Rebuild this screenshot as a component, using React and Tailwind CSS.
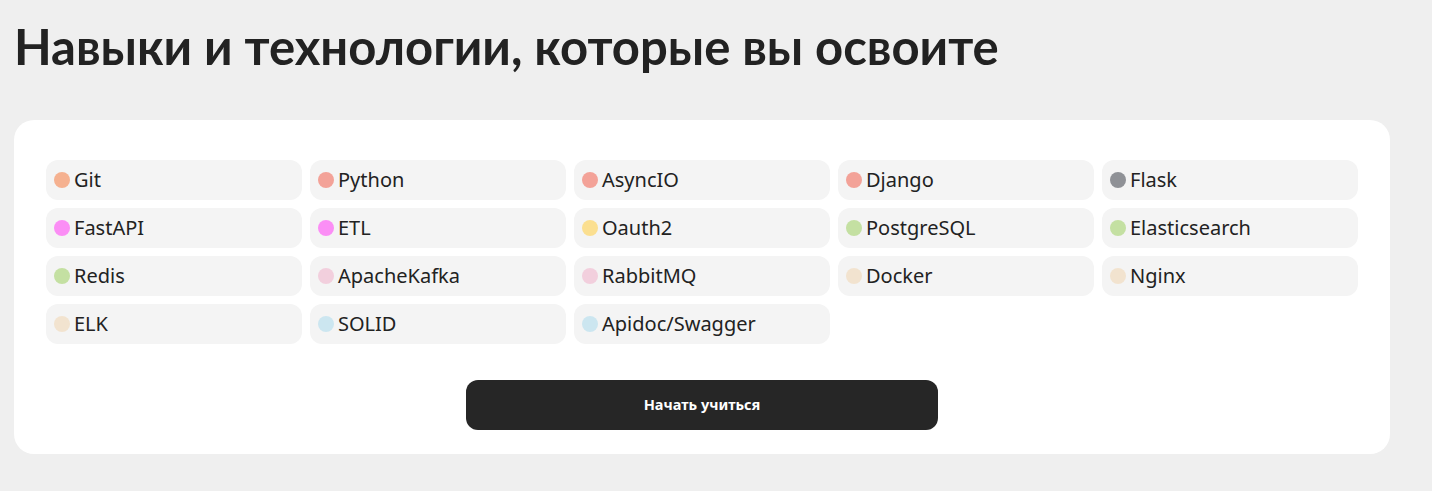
import React from 'react';

const skills = [
  { name: 'Git', color: 'bg-[#f5b190]' },
  { name: 'Python', color: 'bg-[#f3a298]' },
  { name: 'AsyncIO', color: 'bg-[#f3a298]' },
  { name: 'Django', color: 'bg-[#f3a298]' },
  { name: 'Flask', color: 'bg-[#8f9196]' },
  { name: 'FastAPI', color: 'bg-[#fb8ef5]' },
  { name: 'ETL', color: 'bg-[#fb8ef5]' },
  { name: 'Oauth2', color: 'bg-[#fbdf90]' },
  { name: 'PostgreSQL', color: 'bg-[#c4e0a2]' },
  { name: 'Elasticsearch', color: 'bg-[#c4e0a2]' },
  { name: 'Redis', color: 'bg-[#c4e0a2]' },
  { name: 'ApacheKafka', color: 'bg-[#f2cfdd]' },
  { name: 'RabbitMQ', color: 'bg-[#f2cfdd]' },
  { name: 'Docker', color: 'bg-[#f2e3cf]' },
  { name: 'Nginx', color: 'bg-[#f2e3cf]' },
  { name: 'ELK', color: 'bg-[#f2e3cf]' },
  { name: 'SOLID', color: 'bg-[#cce6f0]' },
  { name: 'Apidoc/Swagger', color: 'bg-[#cce6f0]' },
];

function SkillTag({ name, color }) {
  return (
    <div className="flex items-center h-10 pl-2 rounded-xl bg-[#f4f4f4]">
      <span className={`w-4 h-4 rounded-full shrink-0 ${color}`} />
      <span className="ml-1 text-[20px] leading-none text-[#222222]">{name}</span>
    </div>
  );
}

export default function App() {
  return (
    <div
      className="min-h-[491px] bg-[#efefef] pl-[14px] pt-[14px] pb-10"
      style={{ fontFamily: '"Noto Sans", "Open Sans", sans-serif' }}
    >
      <h1 className="font-['Lato',sans-serif] text-[49px] leading-[64px] font-bold text-[#222222]">
        Навыки и технологии, которые вы освоите
      </h1>

      {/* Skills card */}
      <div className="mt-[42px] w-[1376px] bg-white rounded-[20px] px-8 pt-10 pb-6">
        <div className="grid grid-cols-5 gap-2">
          {skills.map((s) => (
            <SkillTag key={s.name} name={s.name} color={s.color} />
          ))}
        </div>
        <div className="flex justify-center mt-9">
          <button className="w-[472px] h-[50px] rounded-xl bg-[#262626] text-white text-[14.5px] font-bold">
            Начать учиться
          </button>
        </div>
      </div>
    </div>
  );
}
